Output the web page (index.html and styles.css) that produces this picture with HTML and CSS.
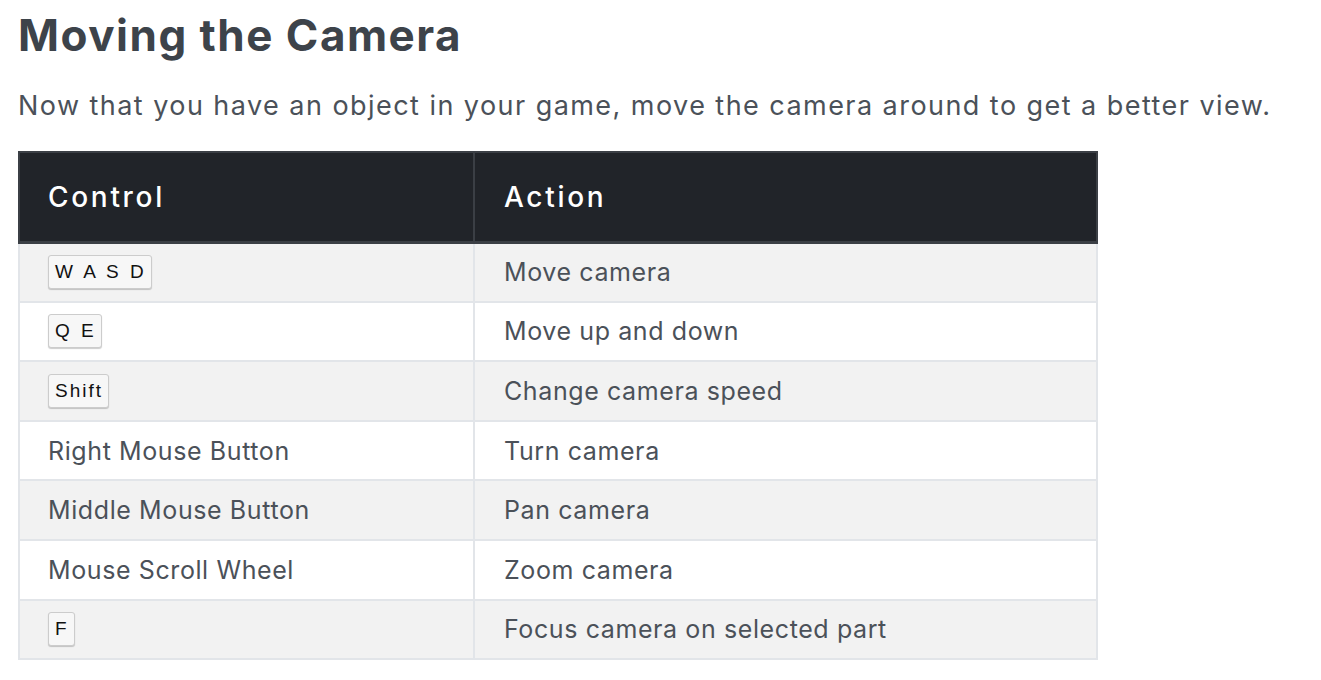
FILE: index.html
```html
<!DOCTYPE html>
<html lang="en">
<head>
<meta charset="utf-8">
<title>Moving the Camera</title>
<link rel="stylesheet" href="styles.css">
</head>
<body>
<main class="doc">
  <h1 class="doc-title">Moving the Camera</h1>
  <p class="doc-text">Now that you have an object in your game, move the camera around to get a better view.</p>
  <table class="controls">
    <thead>
      <tr><th>Control</th><th>Action</th></tr>
    </thead>
    <tbody>
      <tr><td><kbd class="key">W A S D</kbd></td><td>Move camera</td></tr>
      <tr><td><kbd class="key">Q E</kbd></td><td>Move up and down</td></tr>
      <tr><td><kbd class="key">Shift</kbd></td><td>Change camera speed</td></tr>
      <tr><td>Right Mouse Button</td><td>Turn camera</td></tr>
      <tr><td>Middle Mouse Button</td><td>Pan camera</td></tr>
      <tr><td>Mouse Scroll Wheel</td><td>Zoom camera</td></tr>
      <tr><td><kbd class="key">F</kbd></td><td>Focus camera on selected part</td></tr>
    </tbody>
  </table>
</main>
</body>
</html>
```
FILE: styles.css
```css
html, body {
  margin: 0;
  padding: 0;
  background: #ffffff;
}

.doc {
  padding: 8px 0 0 18px;
  font-family: Inter, "Noto Sans", sans-serif;
  color: #4b5159;
}

.doc-title {
  margin: 0;
  font-size: 44px;
  line-height: 54px;
  font-weight: 700;
  color: #3d434a;
  letter-spacing: 1.5px;
}

.doc-text {
  margin: 24px 0 0;
  font-size: 27px;
  line-height: 40px;
  color: #4b5159;
  letter-spacing: 1.45px;
}

.controls {
  margin-top: 25px;
  width: 1080px;
  border-collapse: collapse;
  font-size: 25px;
  letter-spacing: 0.6px;
}

.controls th {
  background: #212429;
  color: #ffffff;
  text-align: left;
  font-weight: 500;
  font-size: 28px;
  letter-spacing: 2.7px;
  height: 90px;
  box-sizing: border-box;
  padding: 0 29px;
  border: 2px solid #3b3f45;
  border-bottom-width: 3px;
}

.controls th:first-child {
  width: 455px;
  padding-left: 28px;
}

.controls td {
  height: 59.6px;
  box-sizing: border-box;
  padding: 0 29px;
  border: 2px solid #e2e5e9;
  vertical-align: middle;
}

.controls td:first-child {
  padding-left: 28px;
}

.controls tbody tr:nth-child(odd) td {
  background: #f2f2f2;
}

.key {
  display: inline-block;
  font-family: "Liberation Sans", Arial, sans-serif;
  font-size: 19px;
  line-height: 32px;
  letter-spacing: 2px;
  word-spacing: 2px;
  padding: 0 5px 0 6px;
  color: #111111;
  background: #f7f7f7;
  border: 1px solid #cccccc;
  border-radius: 3px;
  box-shadow: 0 1px 1px rgba(0, 0, 0, 0.2);
  vertical-align: middle;
}
```
